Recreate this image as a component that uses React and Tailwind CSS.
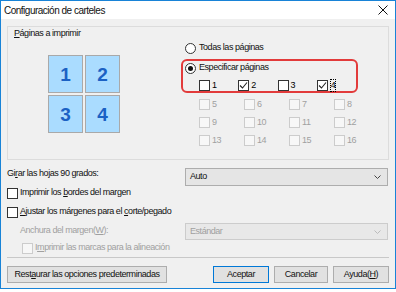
import React from "react";

function Check({ checked, disabled }) {
  return (
    <span
      className={
        "flex h-[11px] w-[11px] shrink-0 items-center justify-center border " +
        (disabled ? "border-[#cccccc] bg-[#f7f7f7]" : "border-[#333333] bg-white")
      }
    >
      {checked && (
        <svg width="9" height="9" viewBox="0 0 9 9">
          <path d="M1 4.5 L3.5 7 L8 1.5" fill="none" stroke="#222" strokeWidth="1.1" />
        </svg>
      )}
    </span>
  );
}

function Radio({ selected }) {
  return (
    <span className="flex h-[11px] w-[11px] shrink-0 items-center justify-center rounded-full border border-[#333333] bg-white">
      {selected && <span className="h-[5px] w-[5px] rounded-full bg-[#111]" />}
    </span>
  );
}

function PageCb({ n, checked, disabled, focus }) {
  return (
    <div className="flex h-[12px] w-[45px] items-center gap-[2px]">
      <Check checked={checked} disabled={disabled} />
      <span
        className={
          "leading-[11px] " +
          (disabled ? "text-[#a0a0a0]" : "text-black") +
          (focus ? " border border-dotted border-black" : "")
        }
      >
        {n}
      </span>
    </div>
  );
}

function Tile({ n }) {
  return (
    <div className="flex h-[38px] w-[35px] items-center justify-center border border-[#a9a9a9] bg-[#aadcff] text-[19px] font-bold leading-none tracking-normal text-[#1b61c4]">
      {n}
    </div>
  );
}

function Btn({ children, w, primary }) {
  return (
    <div
      className={
        "flex h-[17px] items-center justify-center border bg-[#e1e1e1] " +
        (primary ? "border-[#0078d7]" : "border-[#adadad]") +
        " " +
        w
      }
    >
      <span className="whitespace-nowrap">{children}</span>
    </div>
  );
}

export default function App() {
  return (
    <div className="h-[292px] w-[396px] bg-white font-['Liberation_Sans',Arial,sans-serif] text-[9px] tracking-[-0.45px] text-[#111]">
      <div className="flex h-[289px] w-[396px] flex-col border border-[#1883d7] bg-[#f0f0f0]">
        <div className="flex h-[18px] shrink-0 items-center justify-between bg-white pl-[3px] pr-[7px]">
          <span className="text-[10px] tracking-[-0.5px]">Configuración de carteles</span>
          <svg width="10" height="10" viewBox="0 0 10 10">
            <path d="M0.5 0.5 L9.5 9.5 M9.5 0.5 L0.5 9.5" stroke="#111" strokeWidth="1" />
          </svg>
        </div>
        <div className="flex flex-1 flex-col px-[6px] pt-[7px]">
          <div className="flex h-[134px] border border-[#dcdcdc]">
            <div className="flex w-[173px] shrink-0 flex-col">
              <div className="h-[12px] pl-[6px] leading-[12px]">
                <span className="underline">P</span>áginas a imprimir
              </div>
              <div className="ml-[40px] mt-[16px] grid w-[72px] grid-cols-2 gap-[2px]">
                <Tile n="1" />
                <Tile n="2" />
                <Tile n="3" />
                <Tile n="4" />
              </div>
            </div>
            <div className="flex flex-col pt-[15px]">
              <div className="flex h-[12px] items-center gap-[3px] pl-[4px]">
                <Radio />
                <span>Todas las páginas</span>
              </div>
              <div className="mt-[5px] flex h-[34px] w-[177px] flex-col rounded-[6px] border-2 border-[#e23b3b] pl-[2px] pt-[1px]">
                <div className="flex h-[12px] items-center gap-[3px]">
                  <Radio selected />
                  <span>Especificar páginas</span>
                </div>
                <div className="mt-[5px] flex pl-[14px]">
                  <PageCb n="1" />
                  <PageCb n="2" checked />
                  <PageCb n="3" />
                  <PageCb n="4" checked focus />
                </div>
              </div>
              <div className="mt-[5px] flex flex-col gap-[6px] pl-[18px]">
                <div className="flex">
                  <PageCb n="5" disabled />
                  <PageCb n="6" disabled />
                  <PageCb n="7" disabled />
                  <PageCb n="8" disabled />
                </div>
                <div className="flex">
                  <PageCb n="9" disabled />
                  <PageCb n="10" disabled />
                  <PageCb n="11" disabled />
                  <PageCb n="12" disabled />
                </div>
                <div className="flex">
                  <PageCb n="13" disabled />
                  <PageCb n="14" disabled />
                  <PageCb n="15" disabled />
                  <PageCb n="16" disabled />
                </div>
              </div>
            </div>
          </div>

          <div className="mt-[7px] flex items-start">
            <div className="h-[12px] w-[178px] shrink-0 leading-[12px]">
              Gi<span className="underline">r</span>ar las hojas 90 grados:
            </div>
            <div className="mt-[1px] flex h-[18px] w-[203px] items-center justify-between border border-[#adadad] bg-[#e5e5e5] pl-[4px] pr-[6px]">
              <span>Auto</span>
              <svg width="7" height="4" viewBox="0 0 7 4">
                <path d="M0.5 0.5 L3.5 3.5 L6.5 0.5" fill="none" stroke="#444" strokeWidth="1" />
              </svg>
            </div>
          </div>

          <div className="mt-[1px] flex h-[12px] items-center gap-[2px]">
            <Check />
            <span>
              Imprimir los <span className="underline">b</span>ordes del margen
            </span>
          </div>

          <div className="mt-[7px] flex h-[12px] items-center gap-[2px]">
            <Check />
            <span>
              <span className="underline">A</span>justar los márgenes para el <span className="underline">c</span>orte/pegado
            </span>
          </div>

          <div className="mt-[5px] flex items-start">
            <div className="mt-[1px] h-[12px] w-[178px] shrink-0 pl-[13px] leading-[12px] text-[#a0a0a0]">
              Anchura del margen(<span className="underline">W</span>):
            </div>
            <div className="flex h-[17px] w-[203px] items-center justify-between border border-[#cccccc] bg-[#e8e8e8] pl-[4px] pr-[6px] text-[#a0a0a0]">
              <span>Estándar</span>
              <svg width="7" height="4" viewBox="0 0 7 4">
                <path d="M0.5 0.5 L3.5 3.5 L6.5 0.5" fill="none" stroke="#bbbbbb" strokeWidth="1" />
              </svg>
            </div>
          </div>

          <div className="mt-[2px] flex h-[12px] items-center gap-[2px] pl-[15px] text-[#a0a0a0]">
            <Check disabled />
            <span>
              I<span className="underline">m</span>primir las marcas para la alineación
            </span>
          </div>

          <div className="mt-[3px] h-px w-[382px] bg-[#c8c8c8]" />

          <div className="mt-[8px] flex w-[382px] items-center justify-between">
            <Btn w="w-[160px]">
              Rest<span className="underline">a</span>urar las opciones predeterminadas
            </Btn>
            <div className="flex gap-[5px]">
              <Btn w="w-[56px]" primary>
                Aceptar
              </Btn>
              <Btn w="w-[54px]">Cancelar</Btn>
              <Btn w="w-[56px]">
                Ayuda(<span className="underline">H</span>)
              </Btn>
            </div>
          </div>
        </div>
      </div>
    </div>
  );
}
